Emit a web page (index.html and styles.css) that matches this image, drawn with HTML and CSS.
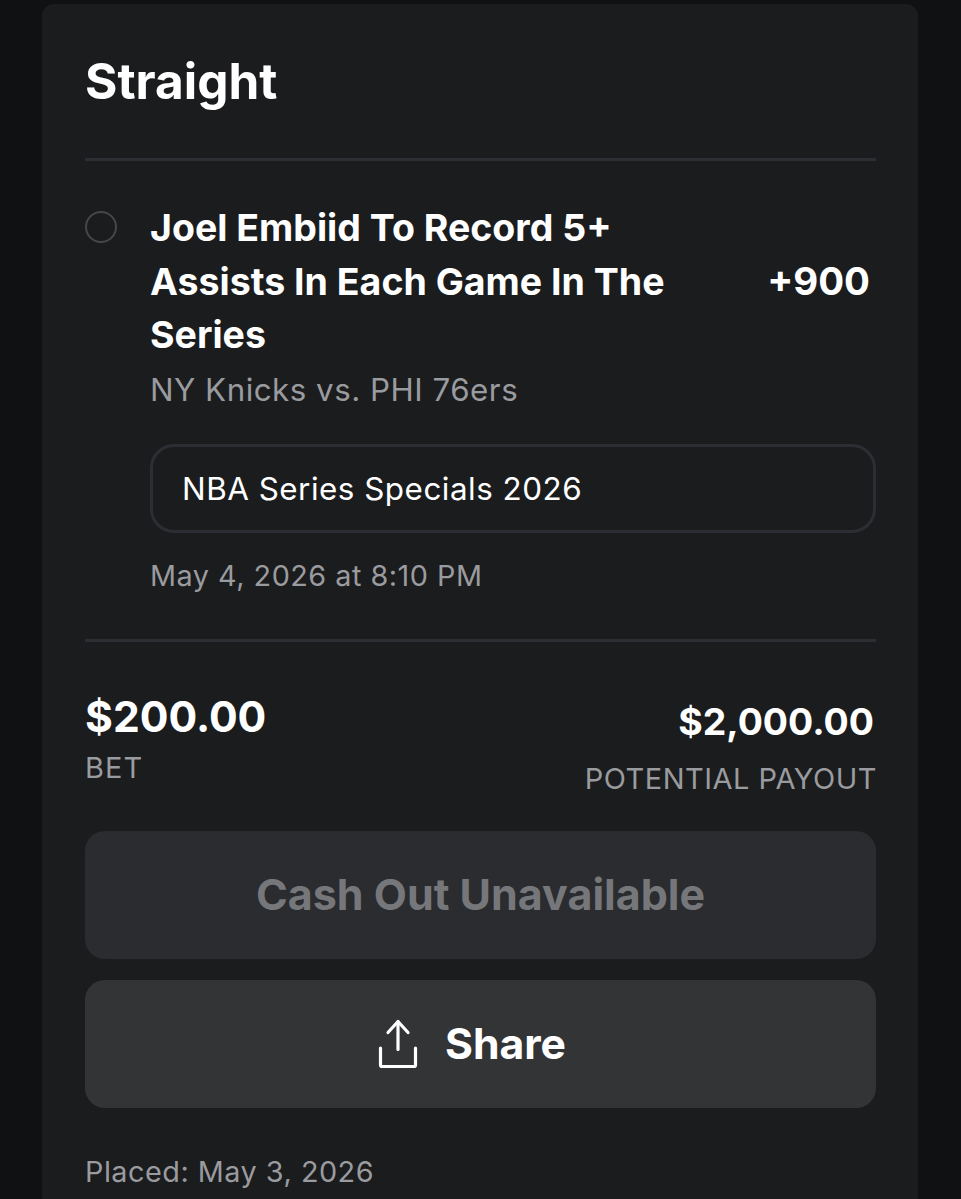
FILE: index.html
```html
<!DOCTYPE html>
<html lang="en">
<head>
<meta charset="utf-8">
<title>Straight bet</title>
<link rel="stylesheet" href="styles.css">
</head>
<body>
<main class="card">
  <h1 class="title">Straight</h1>
  <hr class="rule">
  <section class="leg">
    <span class="radio"></span>
    <div class="leg-body">
      <div class="leg-head">
        <h2 class="selection">Joel Embiid To Record 5+ Assists In Each Game In The Series</h2>
        <span class="odds">+900</span>
      </div>
      <p class="matchup">NY Knicks vs. PHI 76ers</p>
      <div class="market">NBA Series Specials 2026</div>
      <p class="date">May 4, 2026 at 8:10 PM</p>
    </div>
  </section>
  <hr class="rule">
  <section class="totals">
    <div class="total">
      <div class="bet-amount">$200.00</div>
      <div class="label bet-label">BET</div>
    </div>
    <div class="total total-right">
      <div class="payout-amount">$2,000.00</div>
      <div class="label payout-label">POTENTIAL PAYOUT</div>
    </div>
  </section>
  <div class="btn btn-disabled">Cash Out Unavailable</div>
  <div class="btn btn-share">
    <svg class="share-icon" viewBox="0 0 40 50" width="40" height="50" fill="none" stroke="#fff" stroke-width="3.2" stroke-linecap="round" stroke-linejoin="round">
      <path d="M20 30.5V2.5"/>
      <path d="M10 13.5L20 2.5l10 11"/>
      <path d="M2.5 29v17a1.5 1.5 0 0 0 1.5 1.5h32a1.5 1.5 0 0 0 1.5-1.5V29"/>
    </svg>
    <span>Share</span>
  </div>
  <p class="placed">Placed: May 3, 2026</p>
</main>
</body>
</html>
```
FILE: styles.css
```css
* { box-sizing: border-box; }
html, body { margin: 0; height: 100%; }
body {
  background: #101113;
  font-family: Inter, "Liberation Sans", sans-serif;
  color: #fff;
  height: 1199px;
  overflow: hidden;
  padding: 4px 43px 0 42px;
}
.card {
  background: #1b1c1e;
  border-radius: 12px 12px 0 0;
  padding: 45px 42px 0 43px;
  height: 1195px;
}
.title {
  margin: 0;
  font-size: 49.5px;
  line-height: 64px;
  font-weight: 700;
}
.rule {
  margin: 44px 0 0;
  border: 0;
  height: 3px;
  background: #2d2e33;
}
.title + .rule { margin-top: 45px; }
.leg {
  display: flex;
  gap: 33px;
  padding-top: 40px;
}
.radio {
  flex: none;
  width: 32px;
  height: 32px;
  margin-top: 10px;
  border: 2px solid #46474b;
  border-radius: 50%;
}
.leg-body { flex: 1; min-width: 0; }
.leg-head {
  display: flex;
  justify-content: space-between;
  align-items: center;
  padding-right: 6px;
}
.selection {
  margin: 0;
  width: 560px;
  font-size: 37.5px;
  line-height: 53.5px;
  font-weight: 700;
}
.odds { font-size: 38.4px; font-weight: 700; }
.matchup, .date {
  margin: 0;
  font-size: 31.3px;
  color: #9a9b9e;
  letter-spacing: 0.5px;
}
.matchup { line-height: 56px; }
.market {
  margin-top: 26px;
  height: 89px;
  border: 3px solid #2d2e33;
  border-radius: 24px;
  padding: 2px 0 0 29px;
  display: flex;
  align-items: center;
  font-size: 31.4px;
  letter-spacing: 0.5px;
}
.date { margin-top: 23px; line-height: 39px; font-size: 28.8px; }
.totals {
  display: flex;
  justify-content: space-between;
  height: 189px;
}
.total-right { text-align: right; margin-right: -1px; }
.bet-amount { font-size: 42.6px; font-weight: 700; line-height: 64px; margin-top: 43px; }
.payout-amount { font-size: 37.4px; font-weight: 700; line-height: 56px; margin-top: 52px; padding-right: 3px; }
.label { font-size: 29px; color: #9a9b9e; letter-spacing: 0.5px; }
.bet-label { line-height: 38px; letter-spacing: 1px; }
.payout-label { line-height: 58px; }
.btn {
  height: 128px;
  border-radius: 20px;
  display: flex;
  align-items: center;
  justify-content: center;
  font-size: 43px;
  font-weight: 700;
}
.btn-disabled { background: #2b2c30; color: #76777a; padding-bottom: 2px; }
.btn-share { background: #333436; margin-top: 21px; gap: 27px; padding-right: 17px; font-size: 42.7px; }
.share-icon { flex: none; }
.placed {
  margin: 42px 0 0;
  font-size: 28.8px;
  line-height: 44px;
  color: #9a9b9e;
  letter-spacing: 0.5px;
}
```
